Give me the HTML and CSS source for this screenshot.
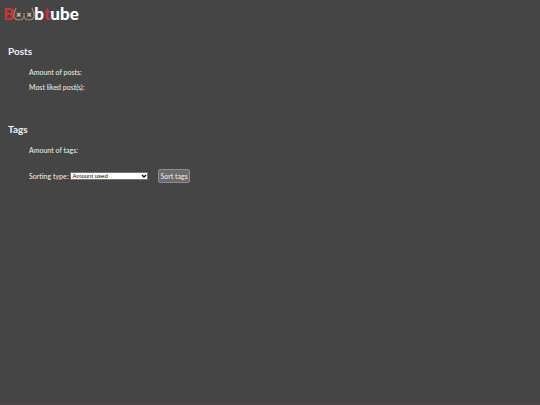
FILE: index.html
```html
<!DOCTYPE html>
<html lang="en">
<head>
    <meta charset="UTF-8">
    <meta name="viewport" content="width=device-width, initial-scale=1.0">
    <title>Boobtube</title>
    <link rel="stylesheet" href="styles.css">
</head>
<body>
    <header>
        <a class="logo" href="index.html" aria-label="Boobtube">
            <span class="red">B</span>
            <svg class="logo-mark" viewBox="0 0 22 16" fill="none" stroke="#a9826e" stroke-width="1.2">
                <path d="M3 1.5C3 4 0.8 6 0.8 9C0.8 12.5 3 14 6 14C9 14 10.6 12.5 11 10C11.4 12.5 13 14 16 14C19 14 21.2 12.5 21.2 9C21.2 6 19 4 19 1.5"/>
                <path d="M11 10V7"/>
                <path d="M4 7L7.5 10.5M7.5 7L4 10.5M14.5 7L18 10.5M18 7L14.5 10.5" stroke="#d9b59c" stroke-width="1.4"/>
            </svg>
            <span>b<span class="red">t</span>ube</span>
        </a>
    </header>

    <main>
        <section class="posts">
            <h2>Posts</h2>
            <div class="stats">
                <p>Amount of posts:</p>
                <p>Most liked post(s):</p>
            </div>
        </section>

        <section class="tags">
            <h2>Tags</h2>
            <div class="stats">
                <p>Amount of tags:</p>
                <form class="sort">
                    <label for="sort-type">Sorting type:</label>
                    <div class="select">
                        <select id="sort-type">
                            <option>Amount used</option>
                        </select>
                        <svg class="arrow" viewBox="0 0 6 4" fill="none" stroke="#111" stroke-width="1.4">
                            <path d="M1 1L3 3L5 1"/>
                        </svg>
                    </div>
                    <button type="button">Sort tags</button>
                </form>
            </div>
        </section>
    </main>
</body>
</html>
```
FILE: styles.css
```css
* {
    margin: 0;
    padding: 0;
    box-sizing: border-box;
}

body {
    min-height: 100vh;
    background-color: #454545;
    border-bottom: 1px solid #4d4749;
    color: #f0f0f0;
    font-family: Lato, sans-serif;
    font-size: 7px;
    line-height: 10px;
}

header {
    padding: 4px 3px 0;
}

/* Logo */
.logo {
    display: inline-flex;
    align-items: center;
    height: 20px;
    color: white;
    font-size: 17px;
    font-weight: 900;
    line-height: 20px;
    text-decoration: none;
}

.logo .red {
    color: #c93638;
}

.logo-mark {
    width: 22px;
    height: 16px;
    margin: 0 -1px;
}

/* Sections */
main {
    padding: 19px 8px 0;
}

h2 {
    font-size: 10px;
    line-height: 16px;
}

.stats {
    padding: 8px 21px 0;
}

.stats p {
    margin-bottom: 5px;
}

.tags {
    margin-top: 29px;
}

/* Sorting */
.sort {
    display: flex;
    align-items: center;
    margin-top: 14px;
}

.select {
    position: relative;
    width: 78px;
    height: 8px;
    margin: 0 10px 0 2px;
}

.select select {
    display: block;
    width: 100%;
    height: 8px;
    padding: 0 1px;
    border: 1px solid #777;
    appearance: none;
    background-color: white;
    color: black;
    font-family: "Liberation Sans", Arial, sans-serif;
    font-size: 6px;
    line-height: 6px;
}

.select .arrow {
    position: absolute;
    top: 2px;
    right: 1px;
    width: 6px;
    height: 4px;
    pointer-events: none;
}

.sort button {
    height: 14px;
    padding: 0 1px;
    border: 1px solid #8c8c8c;
    border-radius: 2px;
    background-color: #6b6b6b;
    color: #f0f0f0;
    font-family: inherit;
    font-size: 7px;
    line-height: 12px;
}
```
